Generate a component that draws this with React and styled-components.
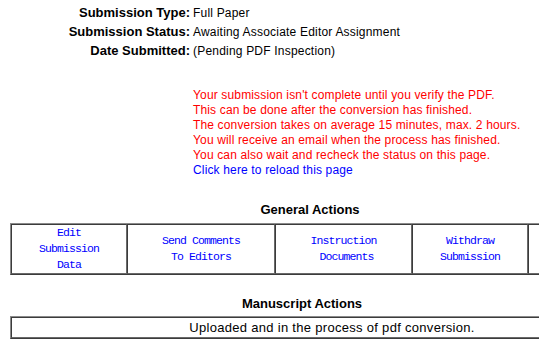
import React from 'react'
import styled, { createGlobalStyle } from 'styled-components'

const GlobalStyle = createGlobalStyle`
  html, body {
    margin: 0;
    padding: 0;
    background: #ffffff;
    overflow: hidden;
  }

  body {
    font-family: "Liberation Sans", Arial, sans-serif;
    color: #000000;
  }
`

const Page = styled.div`
  width: 680px;
  padding-top: 3px;
`

const InfoGrid = styled.dl`
  margin: 0;
  display: grid;
  grid-template-columns: 190px auto;
  column-gap: 3px;
  grid-auto-rows: 19px;
  align-items: center;
`

const Label = styled.dt`
  font-size: 13px;
  font-weight: bold;
  text-align: right;
  white-space: nowrap;
`

const Value = styled.dd`
  margin: 0;
  font-size: 12px;
  letter-spacing: 0.2px;
  white-space: nowrap;
`

const Notice = styled.div`
  margin: 28px 0 0 193px;
  font-size: 12px;
  letter-spacing: 0.15px;
  line-height: 15px;
  color: #ff0000;
  white-space: nowrap;
`

const ReloadLink = styled.a`
  color: #0000ff;
  text-decoration: none;
  cursor: pointer;
`

const Section = styled.section`
  width: ${props => props.width}px;
  margin: ${props => props.top}px 0 0 10px;
`

const Heading = styled.h3`
  margin: 0 0 ${props => props.gap}px 0;
  font-size: 13px;
  font-weight: bold;
  line-height: 16px;
  text-align: center;
`

const ActionTable = styled.table`
  width: 100%;
  border-collapse: separate;
  border-spacing: 0;
  table-layout: fixed;
  border: 1px solid #8a8a8a;
  border-right-color: #3c3c3c;
  border-bottom-color: #3c3c3c;
`

const ActionCell = styled.td`
  width: ${props => props.width}px;
  padding: 0;
  border: 1px solid #3c3c3c;
  border-right-color: #6a6a6a;
  border-bottom-color: #6a6a6a;
  text-align: center;
  vertical-align: middle;
  height: ${props => props.height}px;
`

const ActionLink = styled.a`
  display: inline-block;
  font-family: "Liberation Mono", "Courier New", monospace;
  font-size: 11.5px;
  letter-spacing: -0.9px;
  line-height: 16px;
  color: #0000ff;
  text-decoration: none;
  cursor: pointer;
  white-space: nowrap;
`

const StatusText = styled.span`
  font-size: 13px;
  letter-spacing: 0.3px;
  line-height: 18px;
  white-space: nowrap;
`

const actions = [
  { width: 114, lines: ['Edit', 'Submission', 'Data'] },
  { width: 146, lines: ['Send Comments', 'To Editors'] },
  { width: 135, lines: ['Instruction', '\u00a0Documents'] },
  { width: 114, lines: ['Withdraw', 'Submission'] },
  { width: 81, lines: [] }
]

const App = () => {
  return (
    <Page>
      <GlobalStyle />
      <InfoGrid>
        <Label>Submission Type:</Label>
        <Value>Full Paper</Value>
        <Label>Submission Status:</Label>
        <Value>Awaiting Associate Editor Assignment</Value>
        <Label>Date Submitted:</Label>
        <Value>(Pending PDF Inspection)</Value>
      </InfoGrid>

      <Notice>
        Your submission isn't complete until you verify the PDF.<br />
        This can be done after the conversion has finished.<br />
        The conversion takes on average 15 minutes, max. 2 hours.<br />
        You will receive an email when the process has finished.<br />
        You can also wait and recheck the status on this page.<br />
        <ReloadLink>Click here to reload this page</ReloadLink>
      </Notice>

      <Section width={600} top={24}>
        <Heading gap={5}>General Actions</Heading>
        <ActionTable>
          <tbody>
            <tr>
              {actions.map((action, n) => (
                <ActionCell key={n} width={action.width} height={46}>
                  {action.lines.length > 0 && (
                    <ActionLink>
                      {action.lines.map((line, i) => (
                        <React.Fragment key={line}>
                          {i > 0 && <br />}
                          {line}
                        </React.Fragment>
                      ))}
                    </ActionLink>
                  )}
                </ActionCell>
              ))}
            </tr>
          </tbody>
        </ActionTable>
      </Section>

      <Section width={584} top={21}>
        <Heading gap={4}>Manuscript Actions</Heading>
      </Section>
      <Section width={644} top={0}>
        <ActionTable>
          <tbody>
            <tr>
              <ActionCell height={18}>
                <StatusText>Uploaded and in the process of pdf conversion.</StatusText>
              </ActionCell>
            </tr>
          </tbody>
        </ActionTable>
      </Section>
    </Page>
  )
}

export default App
